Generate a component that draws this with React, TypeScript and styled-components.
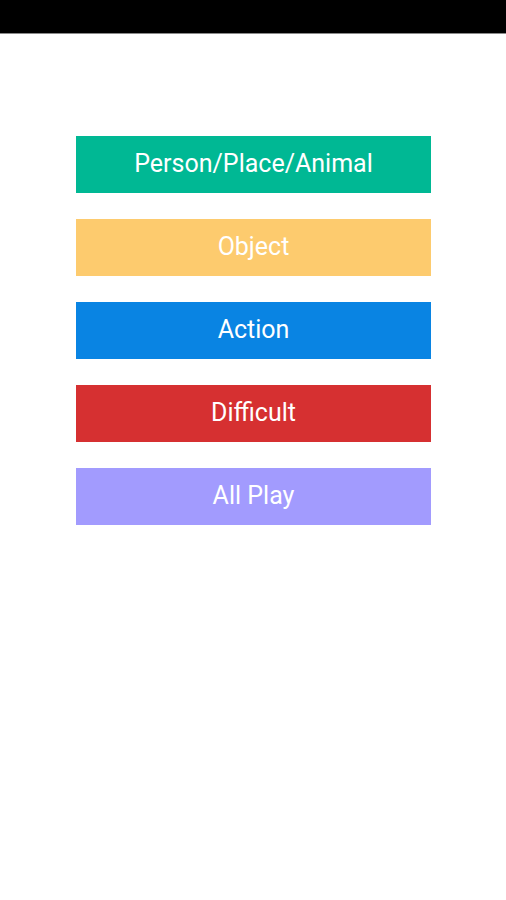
import React from 'react'
import styled, { createGlobalStyle } from 'styled-components'

const GlobalStyle = createGlobalStyle`
  html, body {
    margin: 0;
    padding: 0;
    background: #fff;
  }
  body {
    font-family: Roboto, "Noto Sans", sans-serif;
  }
`;

const StatusBar = styled.div`
  height: 33px;
  background: #000;
  border-bottom: 1px solid #8a8a8a;
`;

const Menu = styled.div`
  display: flex;
  flex-direction: column;
  gap: 26px;
  width: 355px;
  margin: 102px 0 0 76px;
`;

const CategoryButton = styled.button<{ $bg: string }>`
  height: 57px;
  border: none;
  padding: 0 0 2px;
  background-color: ${(p) => p.$bg};
  color: #fff;
  font-family: Roboto, sans-serif;
  font-size: 25px;
  font-weight: 400;
  cursor: pointer;
`;

const categories = [
  { label: 'Person/Place/Animal', color: '#00b894' },
  { label: 'Object', color: '#fdcb6e' },
  { label: 'Action', color: '#0984e3' },
  { label: 'Difficult', color: '#d63031' },
  { label: 'All Play', color: '#a29bfe' },
]

const App = () => {
  return (
    <>
      <GlobalStyle />
      <StatusBar />
      <Menu>
        {categories.map((c) => (
          <CategoryButton key={c.label} $bg={c.color}>
            {c.label}
          </CategoryButton>
        ))}
      </Menu>
    </>
  )
}

export default App
